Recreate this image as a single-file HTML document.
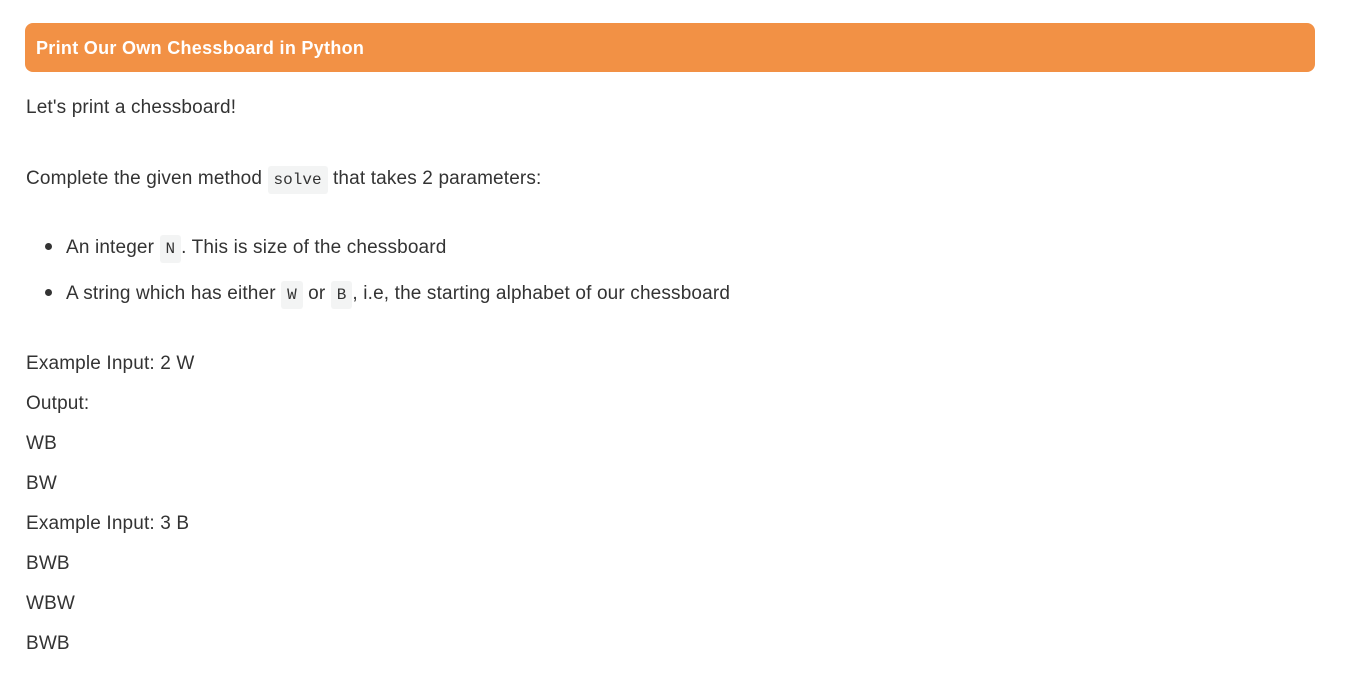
<!DOCTYPE html>
<html><head><meta charset="utf-8"><style>
body{margin:0;background:#fff;width:1350px;height:677px;overflow:hidden;font-family:"Liberation Sans",sans-serif;color:#333;}
.h{position:absolute;left:25px;top:23px;width:1290px;height:49px;background:#f29145;border-radius:8px;color:#fff;font-size:18px;font-weight:bold;line-height:50px;box-sizing:border-box;padding-left:11px;letter-spacing:0.3px;}
.l{position:absolute;left:26px;font-size:19px;letter-spacing:0.15px;line-height:24px;white-space:nowrap;}
code{font-family:"Liberation Mono",monospace;font-size:16px;letter-spacing:0;background:#f3f4f4;border-radius:3px;padding:5px 6px;color:#333;}
.b{left:66px}
.dot{position:absolute;left:45px;width:7px;height:7px;border-radius:50%;background:#333;}
</style></head><body>
<div class="h">Print Our Own Chessboard in Python</div>
<div class="l" style="top:96px">Let's print a chessboard!</div>
<div class="l" style="top:167px">Complete the given method <code>solve</code> that takes 2 parameters:</div>
<div class="dot" style="top:243px"></div>
<div class="l b" style="top:236px">An integer <code>N</code>. This is size of the chessboard</div>
<div class="dot" style="top:289px"></div>
<div class="l b" style="top:282px">A string which has either <code>W</code> or <code>B</code>, i.e, the starting alphabet of our chessboard</div>
<div class="l" style="top:352px">Example Input: 2 W</div>
<div class="l" style="top:392px">Output:</div>
<div class="l" style="top:432px">WB</div>
<div class="l" style="top:472px">BW</div>
<div class="l" style="top:512px">Example Input: 3 B</div>
<div class="l" style="top:552px">BWB</div>
<div class="l" style="top:592px">WBW</div>
<div class="l" style="top:632px">BWB</div>
</body></html>
